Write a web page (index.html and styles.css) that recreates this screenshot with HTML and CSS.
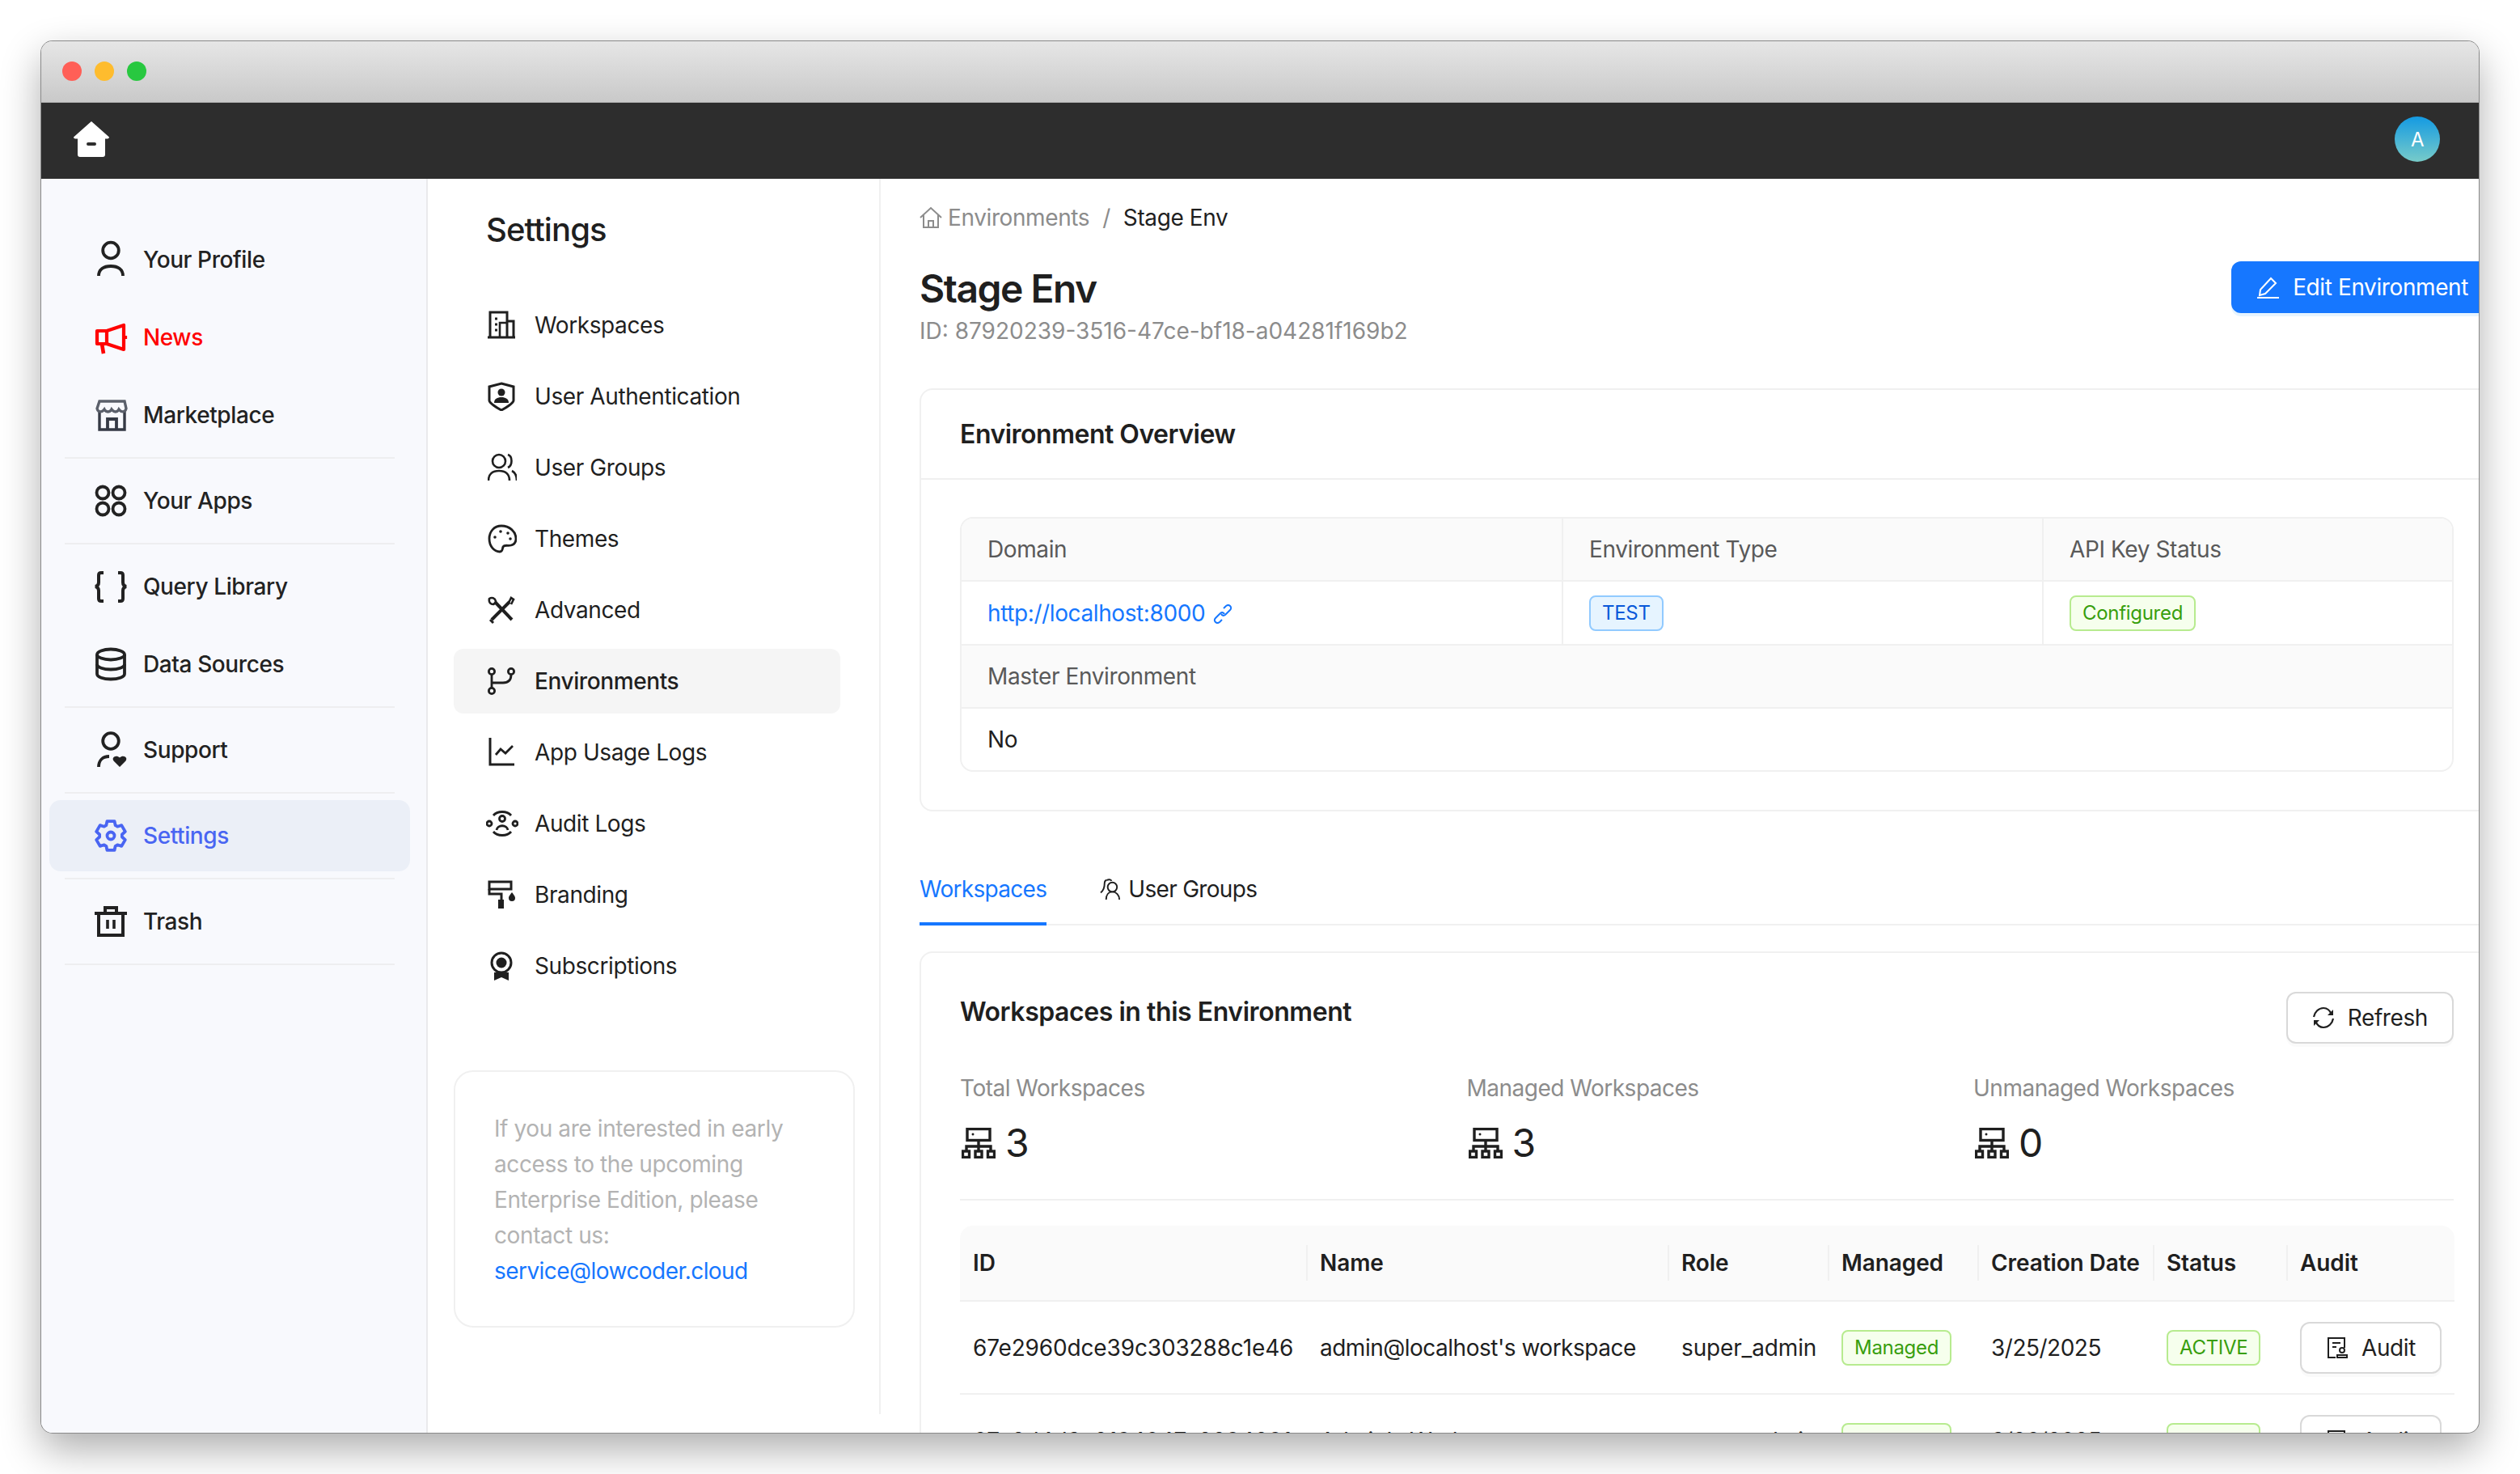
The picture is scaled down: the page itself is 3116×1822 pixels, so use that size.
FILE: index.html
```html
<!DOCTYPE html>
<html>
<head>
    <meta charset="UTF-8">
    <title>Stage Env</title>
    <link rel="stylesheet" href="styles.css">
</head>
<body>
<div class="window">
    <div class="titlebar">
        <span class="light red"></span>
        <span class="light yellow"></span>
        <span class="light green"></span>
    </div>
    <header class="topnav">
        <svg class="logo" viewBox="0 0 44 44"><path fill="#fff" d="M22 0 L44 19.500 Q44 22 41 21.500 L39 21.500 L39 41 Q39 44 36 44 L8 44 Q5 44 5 41 L5 21.500 L3 21.500 Q0 22 0 19.500 Z"/><rect x="16" y="26" width="12" height="4" rx="2" fill="#2d2d2d"/></svg>
        <div class="avatar">A</div>
    </header>
    <div class="body">
        <aside class="sidebar">
            <div class="side-group">
                <a class="side-item"><svg class="side-icon" viewBox="0 0 40 40" fill="none" stroke="currentColor" stroke-width="3.800"><circle cx="20" cy="8.500" r="9.800"/><path d="M5 40c0-8 6-12 15-12s15 4 15 12"/></svg>Your Profile</a>
                <a class="side-item news"><svg class="side-icon" viewBox="0 0 40 40" fill="none" stroke="currentColor" stroke-width="4.200"><path d="M3 12h12L36 5v30l-21-7H3z" stroke-linejoin="round"/><path d="M15 12v16"/><path d="M9 28l2 12" stroke-width="4.600"/><path d="M38 18v4"/></svg>News</a>
                <a class="side-item"><svg class="side-icon" viewBox="0 0 40 40" fill="none" stroke="#353a45" stroke-width="3.400"><path d="M6 15v23h31V15"/><path d="M6 3h31l2 9c-1 5-6 5-9 1-2 4-6 4-9 0-2 4-7 4-9 0-3 4-8 4-9-1z" stroke="#5b606b"/><path d="M16 38V25h11v13" stroke-width="3.800"/></svg>Marketplace</a>
            </div>
            <div class="side-group">
                <a class="side-item"><svg class="side-icon" viewBox="0 0 40 40" fill="none" stroke="currentColor" stroke-width="3.800"><circle cx="10" cy="10" r="7.500"/><circle cx="30" cy="10" r="7.500"/><circle cx="10" cy="30" r="7.500"/><circle cx="30" cy="30" r="7.500"/></svg>Your Apps</a>
            </div>
            <div class="side-group">
                <a class="side-item"><svg class="side-icon" viewBox="0 0 40 40" fill="none" stroke="currentColor" stroke-width="4"><path d="M11 3H8Q5 3 5 6v9q0 4-4 5 4 1 4 5v10q0 3 3 3h3"/><path d="M29 3h3q3 0 3 3v9q0 4 4 5-4 1-4 5v10q0 3-3 3h-3"/></svg>Query Library</a>
                <a class="side-item"><svg class="side-icon" viewBox="0 0 40 40" fill="none" stroke="currentColor" stroke-width="3.800"><ellipse cx="20" cy="8" rx="17" ry="6.500"/><path d="M3 8v24c0 4 8 6.500 17 6.500s17-2.500 17-6.500V8"/><path d="M3 20c0 4 8 6.500 17 6.500S37 24 37 20"/></svg>Data Sources</a>
            </div>
            <div class="side-group">
                <a class="side-item"><svg class="side-icon" viewBox="0 0 40 40" fill="none" stroke="currentColor" stroke-width="3.800"><circle cx="20" cy="9" r="9.800"/><path d="M5 41c0-8 5-13 13-13"/><path fill="currentColor" stroke="none" d="M31 41l-7.500-7.500c-3-4 3-8 7.500-4 4.500-4 10.500 0 7.500 4z"/></svg>Support</a>
            </div>
            <div class="side-group">
                <a class="side-item active"><svg class="side-icon" viewBox="0 0 40 40" fill="none" stroke="currentColor" stroke-width="3.800" stroke-linejoin="round"><path d="M14.300 7.200L15.500 2.050H24.500L25.700 7.200L28.200 8.700L33.300 7.100L37.800 14.900L33.900 18.500V21.500L37.800 25.100L33.300 32.900L28.200 31.300L25.700 32.800L24.500 37.950H15.500L14.300 32.800L11.800 31.300L6.700 32.900L2.200 25.100L6.100 21.500V18.500L2.200 14.900L6.700 7.100L11.800 8.700Z"/><circle cx="20" cy="20" r="4.500"/></svg>Settings</a>
            </div>
            <div class="side-group">
                <a class="side-item"><svg class="side-icon" viewBox="0 0 40 40" fill="none" stroke="currentColor" stroke-width="4"><path d="M0 10h40"/><path d="M13 10V3h14v7"/><path d="M5 10v27h30V10"/><path d="M16 18v11M24 18v11" stroke-width="3.600"/></svg>Trash</a>
            </div>
        </aside>

        <nav class="settings-panel">
            <h2 class="settings-title">Settings</h2>
            <ul class="settings-menu">
                <li class="menu-item"><svg class="menu-icon" viewBox="0 0 36 36" fill="none" stroke="currentColor" stroke-width="3"><path d="M0 33h34"/><path d="M3 33V2h21v31"/><path d="M24 13h8v20"/><path d="M15 33V15h9" stroke-width="2.600"/><path d="M9 10h3M9 17h3M9 24h3" stroke-width="3"/></svg>Workspaces</li>
                <li class="menu-item"><svg class="menu-icon" viewBox="0 0 36 36" fill="none" stroke="currentColor" stroke-width="3"><path d="M17 2l15 4v17c0 3-9 9-15 12C11 32 2 26 2 23V6z"/><circle cx="17" cy="13" r="4.500" fill="currentColor" stroke="none"/><path d="M8 26c0-5 4-7 9-7s9 2 9 7z" fill="currentColor" stroke="none"/></svg>User Authentication</li>
                <li class="menu-item"><svg class="menu-icon" viewBox="0 0 36 36" fill="none" stroke="currentColor" stroke-width="2.600"><circle cx="14" cy="10" r="8"/><path d="M1 34c0-8 5-12 13-12s13 4 13 12"/><path d="M25 2c6 2 6 13 0 16"/><path d="M30 22c4 2 6 6 6 12"/></svg>User Groups</li>
                <li class="menu-item"><svg class="menu-icon" viewBox="0 0 36 36" fill="none" stroke="currentColor" stroke-width="2.800"><path d="M17 2C8 2 2 9 2 18s6 16 13 16c4 0 3-4 4-6 2-3 6-1 10-2 4-1 6-4 6-8C35 9 27 2 17 2z"/><circle cx="9" cy="16" r="1.800" fill="currentColor" stroke="none"/><circle cx="16" cy="9" r="1.800" fill="currentColor" stroke="none"/><circle cx="25" cy="11" r="1.800" fill="currentColor" stroke="none"/><circle cx="28" cy="18" r="1.800" fill="currentColor" stroke="none"/></svg>Themes</li>
                <li class="menu-item"><svg class="menu-icon" viewBox="0 0 36 36" fill="none" stroke="currentColor" stroke-width="4"><path d="M5 30L27 8"/><path d="M26 9l3-6 3 2-3 6" stroke-width="2.600"/><path d="M9 8l21 22"/><path d="M2 4c3-2 7-1 8 3 0 2-1 3-3 4-3 0-6-2-5-7z" stroke-width="2.600"/><path d="M3 30l4 4" stroke-width="3"/></svg>Advanced</li>
                <li class="menu-item selected"><svg class="menu-icon" viewBox="0 0 36 36" fill="none" stroke="currentColor" stroke-width="2.800"><circle cx="5" cy="6" r="3.600"/><circle cx="5" cy="30" r="3.600"/><circle cx="29" cy="6" r="3.600"/><path d="M5 10v16"/><path d="M6 20h13c6 0 10-3 10-10"/></svg>Environments</li>
                <li class="menu-item"><svg class="menu-icon" viewBox="0 0 36 36" fill="none" stroke="currentColor" stroke-width="3"><path d="M3 0v33h30"/><path d="M10 21l6-7 6 5 9-9" stroke-width="2.800"/></svg>App Usage Logs</li>
                <li class="menu-item"><svg class="menu-icon wide" viewBox="0 0 40 36" fill="none" stroke="currentColor" stroke-width="2.800"><path d="M9 8c5-6 17-6 22 0"/><path d="M9 28c5 6 17 6 22 0"/><circle cx="4" cy="18" r="3"/><circle cx="36" cy="18" r="3"/><circle cx="20" cy="12" r="3.500"/><path d="M13 26c1-7 13-7 14 0"/></svg>Audit Logs</li>
                <li class="menu-item"><svg class="menu-icon" viewBox="0 0 36 36" fill="none" stroke="currentColor" stroke-width="3"><rect x="2" y="2" width="27" height="9"/><path d="M2 11v6h15v7"/><rect x="13" y="24" width="7" height="11" fill="currentColor" stroke="none"/><path d="M30 15c3 4 4 5 4 7a4 4 0 0 1-8 0c0-2 1-3 4-7z" fill="currentColor" stroke="none"/></svg>Branding</li>
                <li class="menu-item"><svg class="menu-icon" viewBox="0 0 36 36" fill="none" stroke="currentColor" stroke-width="3"><circle cx="17" cy="14" r="12"/><circle cx="17" cy="14" r="6.500" fill="currentColor" stroke="none"/><path d="M8 26v10l9-4 9 4V26z" fill="currentColor" stroke="none"/></svg>Subscriptions</li>
            </ul>
            <div class="promo">
                If you are interested in early access to the upcoming Enterprise Edition, please contact us:
                <a class="link">service@lowcoder.cloud</a>
            </div>
        </nav>

        <main class="content">
            <div class="breadcrumb">
                <span class="crumb"><svg class="crumb-icon" viewBox="0 0 28 28" fill="none" stroke="currentColor" stroke-width="2"><path d="M1 14L14 2l13 12"/><path d="M5 11v15h18V11"/><path d="M11 26v-8h6v8"/></svg>Environments</span>
                <span class="crumb-sep">/</span>
                <span class="crumb-now">Stage Env</span>
            </div>
            <div class="page-head">
                <div>
                    <h1 class="page-title">Stage Env</h1>
                    <div class="page-id">ID: 87920239-3516-47ce-bf18-a04281f169b2</div>
                </div>
                <button class="btn primary"><svg class="btn-icon" viewBox="0 0 28 28" fill="none" stroke="currentColor" stroke-width="2"><path d="M3 24l1-7L17 3l6 6L10 22z"/><path d="M0 27h27"/></svg>Edit Environment</button>
            </div>

            <section class="card overview">
                <div class="card-head">Environment Overview</div>
                <div class="card-body">
                    <table class="desc">
                        <tr>
                            <th class="col-domain">Domain</th>
                            <th class="col-type">Environment Type</th>
                            <th>API Key Status</th>
                        </tr>
                        <tr>
                            <td><a class="link">http://localhost:8000</a><svg class="link-icon" viewBox="0 0 24 24" fill="none" stroke="#1677ff" stroke-width="2"><path d="M13 5l3-3c2-1.500 4-1 5 0s2 3 0 5l-6 6c-2 1.500-4 1-5-1"/><path d="M11 19l-3 3c-2 1.500-4 1-5 0s-2-3 0-5l6-6c2-1.500 4-1 5 1"/></svg></td>
                            <td><span class="tag blue">TEST</span></td>
                            <td><span class="tag green">Configured</span></td>
                        </tr>
                        <tr><th colspan="3">Master Environment</th></tr>
                        <tr><td colspan="3">No</td></tr>
                    </table>
                </div>
            </section>

            <div class="tabs">
                <div class="tab current">Workspaces</div>
                <div class="tab"><svg class="tab-icon" viewBox="0 0 28 28" fill="none" stroke="currentColor" stroke-width="2"><circle cx="16" cy="11" r="6"/><path d="M8 27c0-6 3-10 8-10s9 4 9 10"/><path d="M9 2c-2 0-3 2-3 4 0 5-2 10-5 12"/><path d="M9 2c2-1 5-1 6 1"/></svg>User Groups</div>
            </div>

            <section class="card workspaces">
                <div class="ws-head">
                    <div class="ws-title">Workspaces in this Environment</div>
                    <button class="btn"><svg class="btn-icon" viewBox="0 0 28 28" fill="none" stroke="currentColor" stroke-width="2.200"><path d="M24 10C22 5 18 2 14 2 8 2 3 7 2 13"/><path d="M4 18c2 5 6 8 10 8 6 0 11-5 12-11"/><path d="M26 4v7h-7" stroke-width="0" fill="currentColor"/><path d="M2 24v-7h7" stroke-width="0" fill="currentColor"/></svg>Refresh</button>
                </div>
                <div class="stats">
                    <div class="stat">
                        <div class="stat-label">Total Workspaces</div>
                        <div class="stat-value"><svg class="stat-icon" viewBox="0 0 42 38" fill="none" stroke="currentColor" stroke-width="3.400"><rect x="7" y="1.500" width="28" height="14"/><path d="M21 15v8M6 29v-6h30v6M21 23v6"/><rect x="1.500" y="29" width="8" height="7.500"/><rect x="17" y="29" width="8" height="7.500"/><rect x="32.500" y="29" width="8" height="7.500"/><circle cx="14" cy="8" r="1.500" fill="currentColor" stroke="none"/></svg>3</div>
                    </div>
                    <div class="stat">
                        <div class="stat-label">Managed Workspaces</div>
                        <div class="stat-value"><svg class="stat-icon" viewBox="0 0 42 38" fill="none" stroke="currentColor" stroke-width="3.400"><rect x="7" y="1.500" width="28" height="14"/><path d="M21 15v8M6 29v-6h30v6M21 23v6"/><rect x="1.500" y="29" width="8" height="7.500"/><rect x="17" y="29" width="8" height="7.500"/><rect x="32.500" y="29" width="8" height="7.500"/><circle cx="14" cy="8" r="1.500" fill="currentColor" stroke="none"/></svg>3</div>
                    </div>
                    <div class="stat">
                        <div class="stat-label">Unmanaged Workspaces</div>
                        <div class="stat-value"><svg class="stat-icon" viewBox="0 0 42 38" fill="none" stroke="currentColor" stroke-width="3.400"><rect x="7" y="1.500" width="28" height="14"/><path d="M21 15v8M6 29v-6h30v6M21 23v6"/><rect x="1.500" y="29" width="8" height="7.500"/><rect x="17" y="29" width="8" height="7.500"/><rect x="32.500" y="29" width="8" height="7.500"/><circle cx="14" cy="8" r="1.500" fill="currentColor" stroke="none"/></svg>0</div>
                    </div>
                </div>
                <table class="list">
                    <thead>
                        <tr>
                            <th class="w-id">ID</th>
                            <th class="w-name">Name</th>
                            <th class="w-role">Role</th>
                            <th class="w-managed">Managed</th>
                            <th class="w-date">Creation Date</th>
                            <th class="w-status">Status</th>
                            <th class="w-audit">Audit</th>
                        </tr>
                    </thead>
                    <tbody>
                        <tr>
                            <td class="cell-tight">67e2960dce39c303288c1e46</td>
                            <td>admin@localhost's workspace</td>
                            <td class="cell-tight">super_admin</td>
                            <td><span class="tag green">Managed</span></td>
                            <td>3/25/2025</td>
                            <td><span class="tag green">ACTIVE</span></td>
                            <td><button class="btn"><svg class="btn-icon" viewBox="0 0 28 28" fill="none" stroke="currentColor" stroke-width="2"><path d="M12 26H3V2h20v12"/><path d="M8 8h10M8 13h5"/><circle cx="20" cy="17" r="3"/><path d="M14 26h12v-3H14z"/></svg>Audit</button></td>
                        </tr>
                        <tr>
                            <td class="cell-tight">67e2d4d3c8194047a8894891</td>
                            <td>Admin's Workspace</td>
                            <td class="cell-tight">super_admin</td>
                            <td><span class="tag green">Managed</span></td>
                            <td>3/26/2025</td>
                            <td><span class="tag green">ACTIVE</span></td>
                            <td><button class="btn"><svg class="btn-icon" viewBox="0 0 28 28" fill="none" stroke="currentColor" stroke-width="2"><path d="M12 26H3V2h20v12"/><path d="M8 8h10M8 13h5"/><circle cx="20" cy="17" r="3"/><path d="M14 26h12v-3H14z"/></svg>Audit</button></td>
                        </tr>
                    </tbody>
                </table>
            </section>
        </main>
    </div>
</div>
</body>
</html>
```

FILE: styles.css
```css
* {
    box-sizing: border-box;
}

html, body {
    margin: 0;
    height: 100%;
    background: #fff;
    overflow: hidden;
}

body {
    padding: 51px;
    font-family: Inter, "Liberation Sans", sans-serif;
    font-size: 28px;
    letter-spacing: -0.4px;
    color: #1f1f1f;
}

.window {
    width: 3014px;
    height: 1720px;
    display: flex;
    flex-direction: column;
    overflow: hidden;
    border-radius: 14px;
    background: #fff;
    box-shadow: 0 0 0 1px #8a8a8a, 0 20px 50px rgba(0,0,0,0.33);
}

.titlebar {
    height: 76px;
    flex: none;
    display: flex;
    align-items: center;
    gap: 16px;
    padding-left: 26px;
    padding-bottom: 1px;
    background: linear-gradient(#e6e6e6, #c9c9c9);
    border-bottom: 1px solid #b4b4b4;
}

.light {
    width: 24px;
    height: 24px;
    border-radius: 50%;
}
.red { background: #ff5f57; }
.yellow { background: #febc2e; }
.green.light { background: #28c840; }

.topnav {
    height: 94px;
    flex: none;
    display: flex;
    align-items: center;
    justify-content: space-between;
    padding: 0 48px 4px 40px;
    background: #2d2d2d;
}

.logo {
    width: 44px;
    height: 44px;
}

.avatar {
    width: 56px;
    height: 56px;
    border-radius: 50%;
    display: flex;
    align-items: center;
    justify-content: center;
    color: #fff;
    font-size: 24px;
    background: linear-gradient(#149ae2, #77cbc9);
}

.body {
    flex: 1;
    display: flex;
    min-height: 0;
}

/* left sidebar */
.sidebar {
    width: 478px;
    flex: none;
    padding: 56px 20px 0 10px;
    background: #f8f9fd;
    border-right: 2px solid #eaeaec;
}

.side-group {
    display: flex;
    flex-direction: column;
    gap: 8px;
    margin-bottom: 8px;
}

.side-group::after {
    content: "";
    width: 408px;
    height: 2px;
    margin-left: 19px;
    background: #eeeef0;
}

.side-item {
    height: 88px;
    display: flex;
    align-items: center;
    gap: 20px;
    padding-left: 56px;
    border-radius: 14px;
    font-weight: 500;
    color: #222;
}

.side-icon {
    width: 40px;
    height: 40px;
    flex: none;
    overflow: visible;
}

.news { color: #f00; }

.active {
    background: #ebeff7;
    color: #4965f2;
}

/* settings panel */
.settings-panel {
    width: 560px;
    flex: none;
    height: 1527px;
    padding: 0 48px 0 32px;
    border-right: 2px solid #f0f0f0;
}

.settings-title {
    margin: 40px 0 0 40px;
    height: 46px;
    font-size: 40px;
    line-height: 46px;
    font-weight: 500;
    letter-spacing: -0.9px;
}

.settings-menu {
    list-style: none;
    margin: 55px 0 0 0;
    padding: 0;
    display: flex;
    flex-direction: column;
    gap: 8px;
}

.menu-item {
    height: 80px;
    display: flex;
    align-items: center;
    gap: 22px;
    padding-left: 42px;
    border-radius: 12px;
}

.menu-icon {
    width: 36px;
    height: 36px;
    flex: none;
}

.menu-icon.wide {
    width: 40px;
    margin-left: -2px;
    margin-right: -2px;
}

.selected {
    background: #f5f5f5;
    font-weight: 500;
}

.promo {
    width: 496px;
    margin-top: 89px;
    padding: 48px 40px 48px 48px;
    line-height: 44px;
    height: 318px;
    color: #b3b3b3;
    border: 2px solid #f0f0f0;
    border-radius: 24px;
}

.promo .link {
    letter-spacing: -0.55px;
}

.link {
    color: #1677ff;
}

/* main content */
.content {
    flex: none;
    width: 1947px;
    margin-left: 48px;
}

.breadcrumb {
    height: 44px;
    margin-top: 26px;
    display: flex;
    align-items: center;
    color: #8c8c8c;
}

.crumb {
    display: flex;
    align-items: center;
    gap: 7px;
}

.crumb-icon {
    width: 28px;
    height: 28px;
}

.crumb-sep {
    margin: 0 16px;
}

.crumb-now {
    color: #1f1f1f;
}

.page-head {
    display: flex;
    justify-content: space-between;
    align-items: flex-start;
    margin-top: 32px;
}

.page-title {
    margin: 4px 0 0 0;
    font-size: 48px;
    line-height: 60px;
    font-weight: 600;
    letter-spacing: -1.5px;
}

.page-id {
    margin-top: 2px;
    line-height: 40px;
    letter-spacing: 0;
    color: #8c8c8c;
}

.btn {
    height: 64px;
    display: inline-flex;
    align-items: center;
    gap: 16px;
    padding: 0 30px;
    font: inherit;
    letter-spacing: inherit;
    color: #1f1f1f;
    background: #fff;
    border: 2px solid #d9d9d9;
    border-radius: 12px;
    box-shadow: 0 4px 0 rgba(0,0,0,0.02);
}

.btn-icon {
    width: 28px;
    height: 28px;
    flex: none;
}

.primary {
    padding: 0 32px;
    color: #fff;
    background: #1677ff;
    border: none;
    box-shadow: 0 4px 0 rgba(5,145,255,0.1);
}

.card {
    border: 2px solid #f0f0f0;
    border-radius: 16px;
}

.overview {
    margin-top: 51px;
    height: 523px;
}

.card-head {
    height: 111px;
    padding-left: 48px;
    display: flex;
    align-items: center;
    font-size: 32px;
    font-weight: 600;
    letter-spacing: -0.5px;
    border-bottom: 2px solid #f0f0f0;
}

.card-body {
    padding: 46px 48px;
}

.desc {
    width: 100%;
    table-layout: fixed;
    border-collapse: separate;
    border-spacing: 0;
    border: 2px solid #f0f0f0;
    border-radius: 16px;
    overflow: hidden;
}

.desc th, .desc td {
    height: 78px;
    padding: 0 32px;
    text-align: left;
    font-weight: 400;
    border-bottom: 2px solid #f0f0f0;
    border-right: 2px solid #f0f0f0;
}

.desc td {
    height: 79px;
}

.desc th {
    background: #fafafa;
    color: #595959;
}

.desc th:last-child, .desc td:last-child {
    border-right: none;
}

.desc tr:last-child td {
    height: 76px;
    border-bottom: none;
}

.col-domain { width: 744px; }
.col-type { width: 594px; }

.link-icon {
    width: 24px;
    height: 24px;
    margin-left: 10px;
    vertical-align: -3px;
}

.tag {
    display: inline-flex;
    align-items: center;
    height: 44px;
    padding: 0 14px;
    font-size: 24px;
    letter-spacing: -0.3px;
    border: 2px solid;
    border-radius: 8px;
    vertical-align: middle;
}

.blue {
    color: #0958d9;
    background: #e6f4ff;
    border-color: #91caff;
}

.green {
    color: #389e0d;
    background: #f6ffed;
    border-color: #b7eb8f;
}

.tabs {
    margin-top: 55px;
    height: 86px;
    display: flex;
    gap: 66px;
    border-bottom: 2px solid #f0f0f0;
}

.tab {
    height: 86px;
    display: flex;
    align-items: center;
    gap: 8px;
    letter-spacing: -0.7px;
    border-bottom: 4px solid transparent;
}

.tab-icon {
    width: 27px;
    height: 27px;
}

.current {
    color: #1677ff;
    border-bottom-color: #1677ff;
}

.workspaces {
    margin-top: 32px;
    height: 700px;
    padding: 48px 48px 0 48px;
}

.ws-head {
    display: flex;
    justify-content: space-between;
    height: 64px;
}

.ws-title {
    font-size: 32px;
    font-weight: 600;
    line-height: 50px;
    letter-spacing: -0.45px;
}

.stats {
    display: grid;
    grid-template-columns: repeat(3, 626.5px);
    height: 161px;
    margin-top: 33px;
    border-bottom: 2px solid #f0f0f0;
}

.stat-label {
    line-height: 44px;
    letter-spacing: -0.5px;
    color: #8c8c8c;
}

.stat-value {
    margin-top: 14px;
    display: flex;
    align-items: center;
    gap: 12px;
    font-size: 48px;
    line-height: 64px;
}

.stat-icon {
    width: 42px;
    height: 38px;
    margin-left: 2px;
}

.list {
    width: 100%;
    margin-top: 31px;
    table-layout: fixed;
    border-collapse: separate;
    border-spacing: 0;
}

.list th {
    position: relative;
    height: 94px;
    padding: 0 16px;
    text-align: left;
    font-weight: 600;
    letter-spacing: -0.1px;
    background: #fafafa;
    border-bottom: 2px solid #f0f0f0;
}

.list th:first-child { border-top-left-radius: 16px; }
.list th:last-child { border-top-right-radius: 16px; }

.list th + th::before {
    content: "";
    position: absolute;
    left: -1px;
    top: 24px;
    width: 2px;
    height: 44px;
    background: #f0f0f0;
}

.list td {
    height: 115px;
    padding: 0 16px;
    white-space: nowrap;
    letter-spacing: -0.5px;
    border-bottom: 2px solid #f0f0f0;
}

.list td.cell-tight {
    letter-spacing: -0.15px;
}

.list td .tag {
    letter-spacing: -0.3px;
}

.list td .btn {
    letter-spacing: -0.4px;
}

.w-id { width: 429px; }
.w-name { width: 447px; }
.w-role { width: 198px; }
.w-managed { width: 185px; }
.w-date { width: 217px; }
.w-status { width: 165px; }
.w-audit { width: 207px; }
```
